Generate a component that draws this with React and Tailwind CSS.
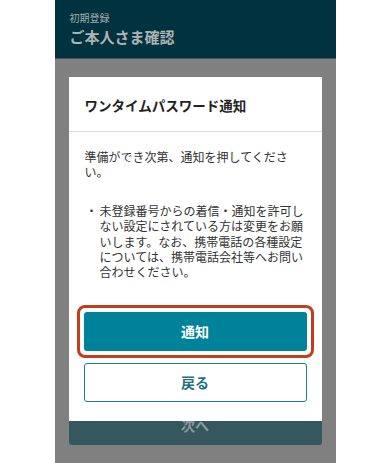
import React from 'react';

const jp = { fontFamily: '"Noto Sans CJK JP", "Noto Sans", sans-serif' };

const NoticeModal = () => {
  return (
    <div className="absolute left-[14px] top-[18px] w-[253px] h-[344px] bg-white flex flex-col">
      <div className="h-[55px] px-4 flex items-center border-b border-[#dedede]">
        <p className="text-[13.5px] font-bold text-[#222] pt-[2px]">ワンタイムパスワード通知</p>
      </div>

      <div className="px-4 pt-[17px] text-[12px] leading-[15.3px] text-[#333]">
        <p>準備ができ次第、通知を押してください。</p>
        <div className="flex mt-[23.5px]">
          <span className="w-[15px] shrink-0 pl-[1px]">・</span>
          <p className="w-[206px]">
            未登録番号からの着信・通知を許可しない設定にされている方は変更をお願いします。なお、携帯電話の各種設定については、携帯電話会社等へお問い合わせください。
          </p>
        </div>
      </div>

      <div className="px-[15px] mt-[32px] flex flex-col gap-[12px]">
        <div className="relative">
          <button className="w-full h-[39px] rounded-[3px] bg-[#00829a] text-white text-[14px] font-bold">
            通知
          </button>
          <div className="absolute -inset-[7px] border-[3px] border-[#c23f1e] rounded-[8px] pointer-events-none" />
        </div>
        <button className="w-full h-[39px] rounded-[3px] border-[1.5px] border-[#1d7e8e] bg-white text-[#1b6f7e] text-[14px] font-bold">
          戻る
        </button>
      </div>
    </div>
  );
};

const App = () => {
  return (
    <div className="w-full h-[463px] bg-white flex justify-center overflow-hidden" style={jp}>
      <div className="w-[281px] h-full flex flex-col">
        <div className="h-[59px] shrink-0 bg-[#00333f] px-[15px] pt-[11px] border-b border-[#3a5a60]">
          <p className="text-[10px] leading-[14px] text-[#a3acae]">初期登録</p>
          <p className="text-[15px] leading-[22px] mt-[1px] font-bold text-[#aeb3b5]">ご本人さま確認</p>
        </div>
        <div className="relative flex-1 bg-[#808080] px-[14px] flex flex-col justify-end pb-[18px]">
          <button className="w-full h-[46px] rounded-[3px] bg-[#35585e] text-[#8c9a9c] text-[14px] font-bold pt-[6px]">
            次へ
          </button>
          <NoticeModal />
        </div>
      </div>
    </div>
  );
};

export default App;
